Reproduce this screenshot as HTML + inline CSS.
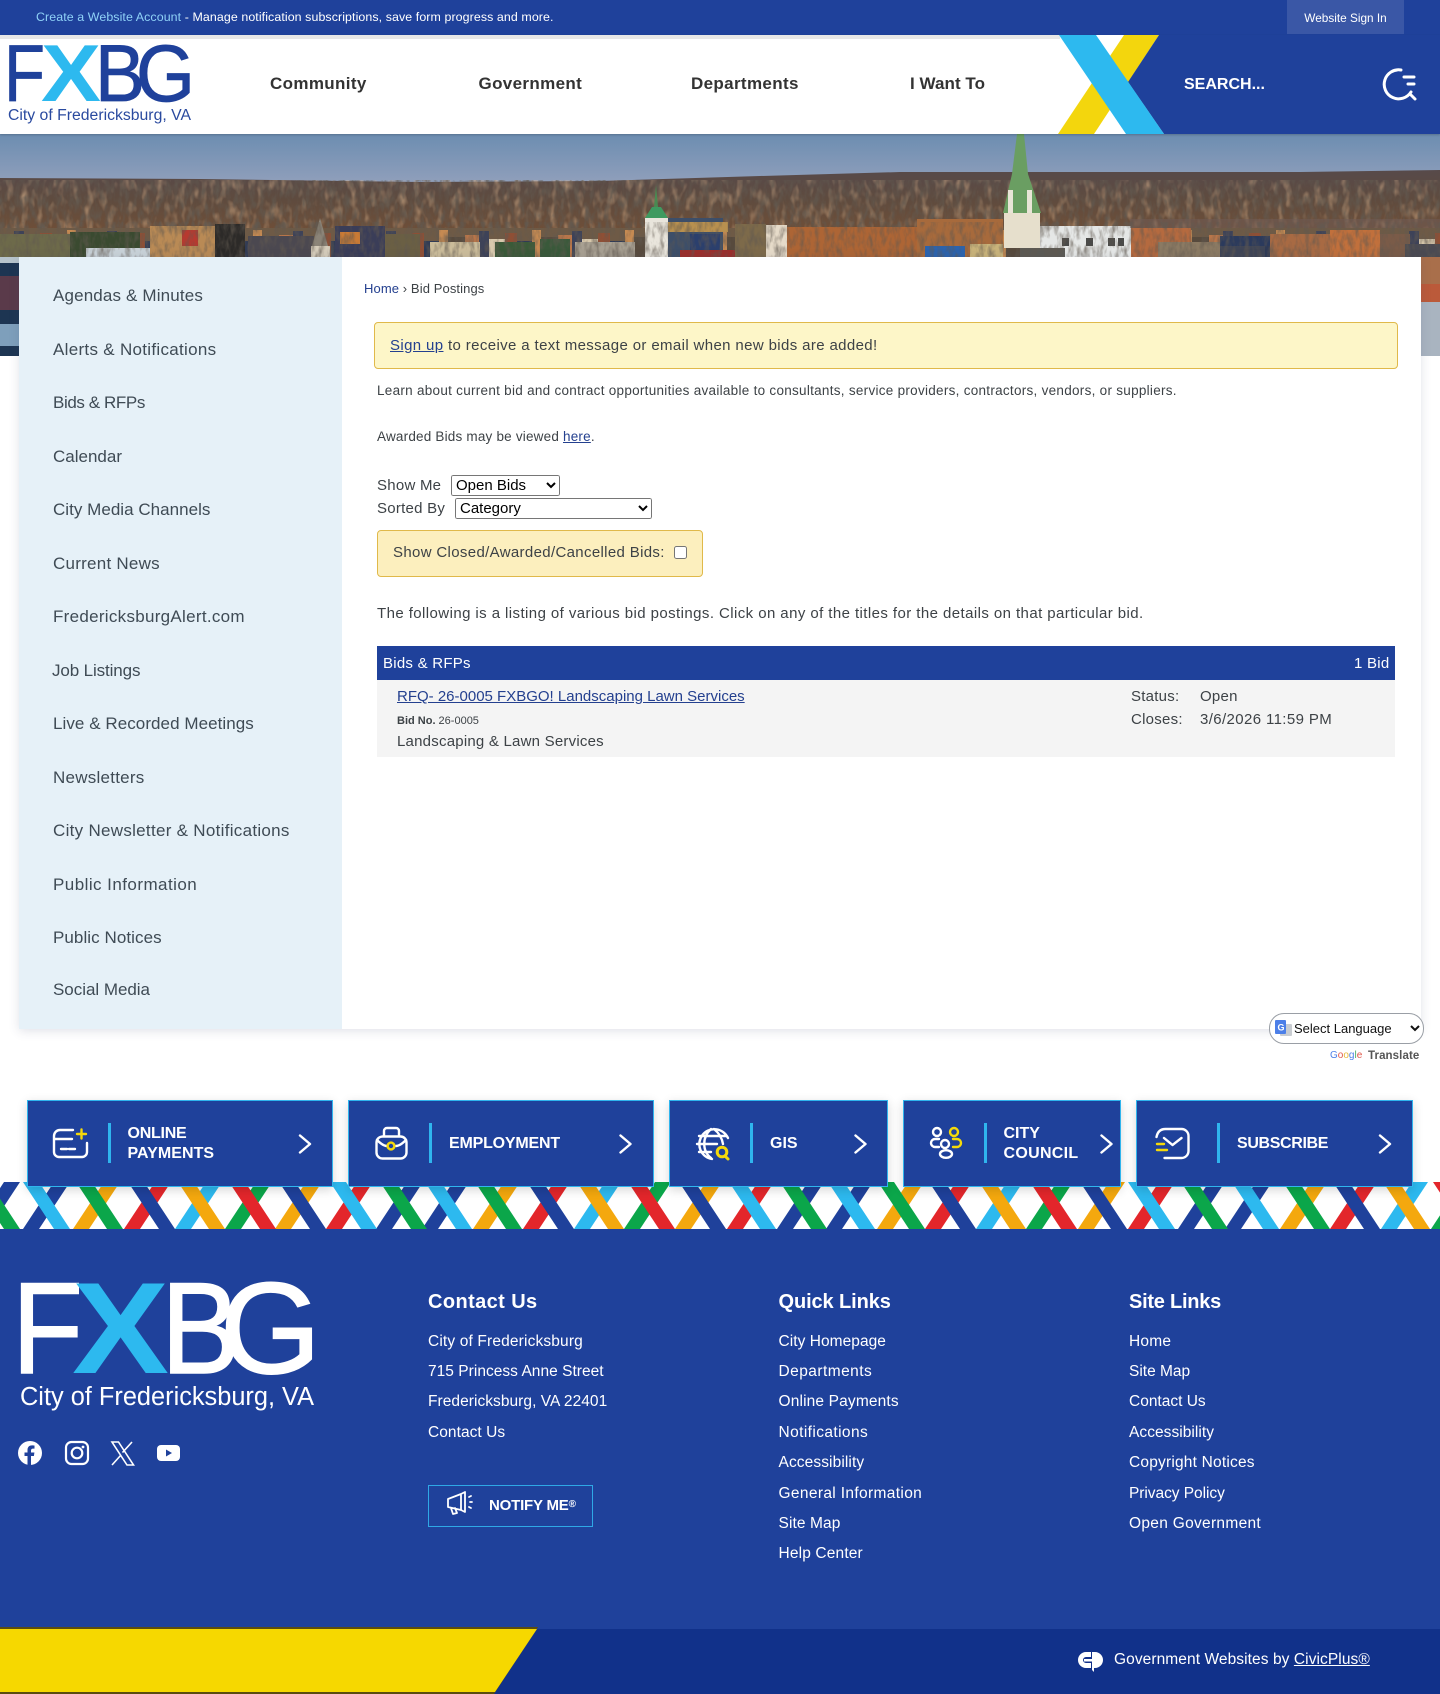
<!DOCTYPE html>
<html lang="en"><head><meta charset="utf-8"><title>Bid Postings - City of Fredericksburg, VA</title>
<style>
html,body{margin:0;padding:0;background:#fff}
body{position:relative;width:1440px;height:1694px;overflow:hidden;font-family:"Liberation Sans",Arial,sans-serif;color:#3d4246}
a{color:inherit}
.abs,.t,select,input{position:absolute}
.t{white-space:nowrap;line-height:20px;text-decoration:none}
.side{font-size:17px;letter-spacing:.15px;color:#3f4b55;left:53px}
.nav{font-size:17px;font-weight:700;letter-spacing:.35px;color:#333;top:74px}
.b15{font-size:15px;letter-spacing:.25px;color:#3d4246}
.b13{font-size:13.5px;letter-spacing:.28px;color:#3d4246}
.lnk{color:#24408f;text-decoration:underline}
.btn{position:absolute;top:1100px;height:85px;background:#1f419b;border:1px solid #2fb5ee;box-shadow:0 3px 10px rgba(0,0,0,.16)}
.dv{position:absolute;width:3px;height:40px;top:1123px;background:#2fb5ee}
.bt{font-size:16px;font-weight:700;color:#fff}
.f{font-size:15.5px;letter-spacing:.2px;color:#fff}
.fh{font-size:20px;font-weight:700;letter-spacing:.4px;color:#fff;top:1292px}
.lb{fill:#2db9ef}.g{fill:#0ba64a}.n{fill:#1f419b}.o{fill:#f4a80e}.r{fill:#e3262b}
svg{position:absolute;overflow:visible}
.w{fill:none;stroke:#fff;stroke-width:2.4;stroke-linecap:round;stroke-linejoin:round}
.y{fill:none;stroke:#f5d90a;stroke-width:2.4;stroke-linecap:round;stroke-linejoin:round}
</style></head><body>

<!-- hero photo -->
<svg style="left:0;top:134px" width="1440" height="222" viewBox="0 0 1440 222">
<defs>
<linearGradient id="sky" x1="0" y1="0" x2="0" y2="1"><stop offset="0" stop-color="#6c8db1"/><stop offset="1" stop-color="#98a3bd"/></linearGradient>
<linearGradient id="tr" x1="0" y1="0" x2="0" y2="1"><stop offset="0" stop-color="#574a4a"/><stop offset=".35" stop-color="#5f4b3e"/><stop offset=".7" stop-color="#6f4f38"/><stop offset="1" stop-color="#6a4530"/></linearGradient>
<filter id="nz" x="0" y="0" width="100%" height="100%"><feTurbulence type="fractalNoise" baseFrequency=".2 .08" numOctaves="3" seed="5"/><feColorMatrix values="0 0 0 0 .12 0 0 0 0 .1 0 0 0 0 .08 0 0 0 1.8 -.72"/></filter>
<filter id="nz2" x="0" y="0" width="100%" height="100%"><feTurbulence type="fractalNoise" baseFrequency=".14 .07" numOctaves="2" seed="9"/><feColorMatrix values="0 0 0 0 .68 0 0 0 0 .44 0 0 0 0 .26 0 0 0 1.4 -.68"/></filter>
<pattern id="hs" width="93" height="30" patternUnits="userSpaceOnUse" x="0" y="93">
<rect width="93" height="30" fill="#6e5a46"/>
<rect x="0" y="8" width="14" height="22" fill="#b9764a"/><rect x="14" y="4" width="10" height="26" fill="#3d4258"/><rect x="24" y="12" width="16" height="18" fill="#d8c9ad"/><rect x="40" y="6" width="12" height="24" fill="#8f4f35"/><rect x="52" y="14" width="15" height="16" fill="#2f3a55"/><rect x="67" y="3" width="9" height="27" fill="#c58a52"/><rect x="76" y="10" width="17" height="20" fill="#574a3d"/>
</pattern>
</defs>
<rect width="1440" height="60" fill="url(#sky)"/>
<polygon points="0,44 200,45 420,48 600,47 760,42 900,38 1100,38 1300,38 1440,36 1440,123 0,123" fill="url(#tr)"/>
<rect y="46" width="1440" height="77" filter="url(#nz2)"/>
<rect y="46" width="1440" height="77" filter="url(#nz)"/>
<rect y="94" width="1440" height="29" fill="url(#hs)"/>
<!-- left houses -->
<rect x="0" y="100" width="70" height="23" fill="#6d6a4a"/>
<rect x="70" y="98" width="70" height="25" fill="#3a4a30"/>
<rect x="86" y="114" width="66" height="9" fill="#c9d2d8"/>
<rect x="150" y="92" width="65" height="31" fill="#b98a55"/>
<rect x="182" y="96" width="16" height="16" fill="#b63a30"/>
<rect x="215" y="90" width="30" height="33" fill="#2c2a28"/>
<rect x="248" y="102" width="66" height="21" fill="#4b4850"/>
<polygon points="320,84 312,112 328,112" fill="#8b8478"/><rect x="311" y="112" width="19" height="11" fill="#d5ccba"/>
<rect x="335" y="92" width="50" height="31" fill="#3a3d58"/>
<rect x="340" y="98" width="20" height="12" fill="#c97a35"/>
<rect x="385" y="100" width="35" height="23" fill="#6a5f44"/>
<rect x="430" y="108" width="50" height="15" fill="#cbbc9a"/>
<rect x="495" y="108" width="40" height="15" fill="#3a5a38"/>
<rect x="540" y="105" width="30" height="18" fill="#39593a"/>
<rect x="575" y="108" width="60" height="15" fill="#a8a092"/>
<!-- small tower -->
<polygon points="656,51 654,73 658,73" fill="#4a8a52"/>
<polygon points="645,84 668,84 661,73 652,73" fill="#3f9a60"/>
<rect x="645" y="84" width="23" height="39" fill="#e9e5dc"/>
<rect x="668" y="84" width="55" height="39" fill="#3d4e68"/><rect x="668" y="88" width="60" height="10" fill="#b8904f"/>
<rect x="690" y="100" width="30" height="18" fill="#2b3f6d"/>
<rect x="680" y="116" width="75" height="7" fill="#9b2f2c"/>
<rect x="735" y="90" width="31" height="33" fill="#7d6a4a"/>
<!-- orange block -->
<rect x="766" y="91" width="21" height="32" fill="#e6dbc9"/>
<rect x="787" y="93" width="130" height="30" fill="#ad6535"/>
<rect x="917" y="85" width="86" height="38" fill="#a76a3c"/>
<rect x="925" y="112" width="40" height="11" fill="#2c63ad"/>
<rect x="970" y="110" width="33" height="13" fill="#c9b37a"/>
<!-- right houses -->
<rect x="1040" y="92" width="91" height="31" fill="#e5e7e6"/>
<rect x="1062" y="104" width="7" height="8" fill="#4a4a48"/><rect x="1086" y="104" width="7" height="8" fill="#4a4a48"/><rect x="1108" y="104" width="7" height="8" fill="#4a4a48"/><rect x="1118" y="104" width="6" height="8" fill="#4a4a48"/>
<rect x="1020" y="114" width="45" height="9" fill="#5c5a54"/>
<rect x="1131" y="94" width="60" height="29" fill="#b56a3f"/>
<rect x="1158" y="108" width="62" height="15" fill="#8b7a63"/>
<rect x="1220" y="102" width="50" height="10" fill="#2b3a5c"/><rect x="1220" y="112" width="45" height="11" fill="#3f4556"/>
<rect x="1270" y="100" width="60" height="23" fill="#a86a43"/>
<rect x="1330" y="96" width="50" height="27" fill="#c1703c"/>
<rect x="1380" y="100" width="30" height="23" fill="#7a5b48"/>
<rect x="1405" y="110" width="35" height="13" fill="#4a4a52"/>
<rect x="1130" y="85" width="310" height="9" fill="#6f5b55" opacity=".55"/>
<rect y="88" width="1440" height="35" filter="url(#nz)" opacity=".8"/>
<!-- steeple -->
<polygon points="1017,0 1024,0 1028,40 1041,79 1003,79 1012,40" fill="#6a9e62"/>
<rect x="1008" y="56" width="5" height="23" fill="#e8e4d6"/><rect x="1027" y="56" width="5" height="23" fill="#e8e4d6"/>
<rect x="1004" y="79" width="36" height="35" fill="#e6dfcc"/>
<!-- side slivers -->
<rect x="0" y="123" width="19" height="99" fill="#1d3552"/>
<rect x="0" y="123" width="19" height="6" fill="#b7c4cc"/>
<rect x="0" y="142" width="19" height="34" fill="#5a3a4a"/>
<rect x="0" y="190" width="19" height="22" fill="#7e9fbb"/>
<rect x="1421" y="123" width="19" height="27" fill="#a96f4b"/>
<rect x="1421" y="150" width="19" height="18" fill="#bb5a3a"/>
<rect x="1421" y="168" width="19" height="54" fill="#a9b4c0"/>
</svg>

<!-- top bar -->
<div class="abs" style="left:0;top:0;width:1440px;height:35px;background:#1f419b"></div>
<div class="t" style="left:36px;top:7px;font-size:12.4px;letter-spacing:.09px;color:#fff"><a href="#" style="color:#8fd2f7;text-decoration:none">Create a Website Account</a> - Manage notification subscriptions, save form progress and more.</div>
<div class="abs" style="left:1287px;top:0;width:117px;height:34px;background:#3a57a6"></div>
<div class="t" style="left:1287px;width:117px;text-align:center;top:8px;font-size:11.8px;color:#fff">Website Sign In</div>

<!-- header -->
<div class="abs" style="left:0;top:35px;width:1440px;height:99px;background:#fff;box-shadow:0 1px 2px rgba(0,0,0,.2)"></div>
<div class="abs" style="left:0;top:35px;width:1060px;height:4px;background:#e7e7e7"></div>
<svg style="left:0;top:0" width="1440" height="134" viewBox="0 0 1440 134">
<polygon points="1124,35 1159,35 1094,134 1058,134" fill="#f3d60d"/>
<polygon points="1159,35 1440,35 1440,134 1164,134 1128,82" fill="#1f419b"/>
<polygon points="1059,35 1096,35 1164,134 1126,134" fill="#2db9ef"/>
<g font-family="Liberation Sans,Arial,sans-serif" font-size="81">
<text x="4" y="101" textLength="41" lengthAdjust="spacingAndGlyphs" fill="#1f419b" stroke="#1f419b" stroke-width=".8">F</text>
<text x="41" y="101" textLength="60" lengthAdjust="spacingAndGlyphs" fill="#2db9ef" font-weight="700">X</text>
<text x="95" y="101" textLength="50" lengthAdjust="spacingAndGlyphs" fill="#1f419b" stroke="#1f419b" stroke-width=".8">B</text>
<text x="136" y="101" textLength="59" lengthAdjust="spacingAndGlyphs" fill="#1f419b" stroke="#1f419b" stroke-width=".8">G</text>
</g>
<text x="8" y="120" font-family="Liberation Sans,Arial,sans-serif" font-size="15.500" textLength="183" lengthAdjust="spacingAndGlyphs" fill="#2a4a9f">City of Fredericksburg, VA</text>
<!-- search icon -->
<g class="w" style="stroke-width:3">
<path d="M1401 70A14.500 14.500 0 1 0 1411 92"/><path d="M1404 77h10M1408 84h6M1411 95l4 4"/>
</g>
</svg>
<a class="t nav" href="#" style="left:270px">Community</a>
<a class="t nav" href="#" style="left:478.500px">Government</a>
<a class="t nav" href="#" style="left:691px">Departments</a>
<a class="t nav" href="#" style="left:910px;letter-spacing:.05px">I Want To</a>
<div class="t" style="left:1184px;top:75px;font-size:16px;font-weight:700;color:#fff">SEARCH...</div>

<!-- main panel -->
<div class="abs" style="left:19px;top:257px;width:1402px;height:772px;background:#fff;box-shadow:0 2px 10px rgba(60,70,110,.16)"></div>
<div class="abs" style="left:19px;top:257px;width:323px;height:772px;background:#e6f1f8"></div>

<a class="t side" href="#" style="top:285.500px">Agendas &amp; Minutes</a>
<a class="t side" href="#" style="top:339.500px;letter-spacing:.3px">Alerts &amp; Notifications</a>
<a class="t side" href="#" style="top:392.500px;letter-spacing:-.4px">Bids &amp; RFPs</a>
<a class="t side" href="#" style="top:446.500px;letter-spacing:0">Calendar</a>
<a class="t side" href="#" style="top:499.500px;letter-spacing:.03px">City Media Channels</a>
<a class="t side" href="#" style="top:553.500px;letter-spacing:.25px">Current News</a>
<a class="t side" href="#" style="top:606.500px;letter-spacing:.29px">FredericksburgAlert.com</a>
<a class="t side" href="#" style="top:660.500px;left:52px;letter-spacing:-.12px">Job Listings</a>
<a class="t side" href="#" style="top:713.500px;letter-spacing:.06px">Live &amp; Recorded Meetings</a>
<a class="t side" href="#" style="top:767.500px;letter-spacing:.25px">Newsletters</a>
<a class="t side" href="#" style="top:820.500px;letter-spacing:.29px">City Newsletter &amp; Notifications</a>
<a class="t side" href="#" style="top:874.500px;letter-spacing:.45px">Public Information</a>
<a class="t side" href="#" style="top:927.500px;letter-spacing:.07px">Public Notices</a>
<a class="t side" href="#" style="top:980px;letter-spacing:-.03px">Social Media</a>

<div class="t" style="left:364px;top:278.500px;font-size:13px;letter-spacing:.1px"><a href="#" style="color:#24408f;text-decoration:none">Home</a> › Bid Postings</div>

<div class="abs" style="left:374px;top:322px;width:1022px;height:45px;background:#fdf6c8;border:1px solid #e0b94a;border-radius:4px"></div>
<div class="t b15" style="left:390px;top:335.500px;letter-spacing:.37px"><a class="lnk" href="#">Sign up</a> to receive a text message or email when new bids are added!</div>
<div class="t b13" style="left:377px;top:381px">Learn about current bid and contract opportunities available to consultants, service providers, contractors, vendors, or suppliers.</div>
<div class="t b13" style="left:377px;top:427px;letter-spacing:.2px">Awarded Bids may be viewed <a class="lnk" href="#">here</a>.</div>

<div class="t b15" style="left:377px;top:476px">Show Me</div>
<select style="left:451px;top:475px;width:109px;height:21px;font:15px 'Liberation Sans',Arial,sans-serif;padding:0;margin:0"><option>Open Bids</option></select>
<div class="t b15" style="left:377px;top:499px">Sorted By</div>
<select style="left:455px;top:498px;width:197px;height:21px;font:15px 'Liberation Sans',Arial,sans-serif;padding:0;margin:0"><option>Category</option></select>

<div class="abs" style="left:377px;top:530px;width:324px;height:45px;background:#fcefbe;border:1px solid #e0b94a;border-radius:4px"></div>
<div class="t b15" style="left:393px;top:543px;letter-spacing:.34px">Show Closed/Awarded/Cancelled Bids:</div>
<input type="checkbox" style="left:674px;top:546px;width:13px;height:13px;margin:0">

<div class="t b15" style="left:377px;top:603.500px;letter-spacing:.42px">The following is a listing of various bid postings. Click on any of the titles for the details on that particular bid.</div>

<div class="abs" style="left:377px;top:646px;width:1018px;height:34px;background:#1f419b"></div>
<div class="t b15" style="left:383px;top:653.500px;color:#fff">Bids &amp; RFPs</div>
<div class="t b15" style="left:1354px;top:653.500px;color:#fff">1 Bid</div>
<div class="abs" style="left:377px;top:680px;width:1018px;height:77px;background:#f4f4f4"></div>
<a class="t b15 lnk" href="#" style="left:397px;top:687px;color:#24408f;letter-spacing:0">RFQ- 26-0005 FXBGO! Landscaping Lawn Services</a>
<div class="t" style="left:397px;top:711px;font-size:11px;color:#3d4246"><b>Bid No.</b> 26-0005</div>
<div class="t b15" style="left:397px;top:732px;letter-spacing:.22px">Landscaping &amp; Lawn Services</div>
<div class="t b15" style="left:1131px;top:687px">Status:</div>
<div class="t b15" style="left:1200px;top:687px">Open</div>
<div class="t b15" style="left:1131px;top:710px">Closes:</div>
<div class="t b15" style="left:1200px;top:710px;letter-spacing:.38px">3/6/2026 11:59 PM</div>

<!-- translate -->
<select style="left:1269px;top:1013px;width:155px;height:31px;border:1px solid #9a9fa6;border-radius:15px;background:#fff;font:13px 'Liberation Sans',Arial,sans-serif;padding:0 0 0 20px;margin:0;color:#111"><option>Select Language</option></select>
<svg style="left:1275px;top:1020px" width="18" height="18" viewBox="0 0 18 18"><rect x="5" y="4" width="12" height="12" rx="1" fill="#c9cdd2"/><rect x="0" y="0" width="11" height="14" rx="1" fill="#4c7fe8"/><text x="2.500" y="10.500" font-size="9" font-weight="700" fill="#fff" font-family="Liberation Sans,Arial,sans-serif">G</text></svg>
<div class="t" style="left:1330px;top:1046px;font-size:10px;font-weight:400"><span style="color:#4c7fe8">G</span><span style="color:#e0574a">o</span><span style="color:#e8b93a">o</span><span style="color:#4c7fe8">g</span><span style="color:#4caf6a">l</span><span style="color:#e0574a">e</span></div>
<div class="t" style="left:1368px;top:1046px;font-size:11.500px;font-weight:700;letter-spacing:.1px;color:#555">Translate</div>

<!-- woven strip -->
<svg style="left:0;top:1182px" width="1440" height="47" viewBox="0 0 1440 47">
<g transform="skewX(-33.4)">
<rect class="n" x="4" width="16" height="47"/><rect class="n" x="54" width="16" height="47"/><rect class="o" x="104" width="16" height="47"/><rect class="r" x="155" width="16" height="47"/><rect class="lb" x="206" width="16" height="47"/><rect class="g" x="256" width="16" height="47"/><rect class="o" x="306" width="16" height="47"/><rect class="r" x="357" width="16" height="47"/><rect class="n" x="407" width="16" height="47"/><rect class="n" x="453" width="16" height="47"/><rect class="o" x="504" width="16" height="47"/><rect class="r" x="554" width="16" height="47"/><rect class="lb" x="605" width="16" height="47"/><rect class="g" x="655" width="16" height="47"/><rect class="o" x="706" width="16" height="47"/><rect class="r" x="758" width="16" height="47"/><rect class="n" x="808" width="16" height="47"/><rect class="n" x="857" width="16" height="47"/><rect class="o" x="908" width="16" height="47"/><rect class="r" x="956" width="16" height="47"/><rect class="lb" x="1007" width="16" height="47"/><rect class="g" x="1057" width="16" height="47"/><rect class="o" x="1109" width="16" height="47"/><rect class="r" x="1159" width="16" height="47"/><rect class="n" x="1209" width="16" height="47"/><rect class="n" x="1256" width="16" height="47"/><rect class="o" x="1311" width="16" height="47"/><rect class="r" x="1361" width="16" height="47"/><rect class="lb" x="1412" width="16" height="47"/><rect class="g" x="1462" width="16" height="47"/>
</g>
<g transform="skewX(33.4)">
<rect class="g" x="-27" width="16" height="47"/><rect class="lb" x="23" width="16" height="47"/><rect class="g" x="76" width="16" height="47"/><rect class="n" x="128" width="16" height="47"/><rect class="o" x="178" width="16" height="47"/><rect class="r" x="229" width="16" height="47"/><rect class="n" x="279" width="16" height="47"/><rect class="lb" x="330" width="16" height="47"/><rect class="g" x="380" width="16" height="47"/><rect class="lb" x="425" width="16" height="47"/><rect class="g" x="475" width="16" height="47"/><rect class="n" x="527" width="16" height="47"/><rect class="o" x="577" width="16" height="47"/><rect class="r" x="628" width="16" height="47"/><rect class="n" x="679" width="16" height="47"/><rect class="lb" x="729" width="16" height="47"/><rect class="g" x="780" width="16" height="47"/><rect class="lb" x="828" width="16" height="47"/><rect class="g" x="878" width="16" height="47"/><rect class="n" x="929" width="16" height="47"/><rect class="o" x="979" width="16" height="47"/><rect class="r" x="1030" width="16" height="47"/><rect class="n" x="1080" width="16" height="47"/><rect class="lb" x="1128" width="16" height="47"/><rect class="g" x="1181" width="16" height="47"/><rect class="lb" x="1232" width="16" height="47"/><rect class="g" x="1283" width="16" height="47"/><rect class="n" x="1333" width="16" height="47"/><rect class="o" x="1383" width="16" height="47"/><rect class="r" x="1433" width="16" height="47"/>
</g>
</svg>

<!-- buttons -->
<div class="btn" style="left:27px;width:304px"></div>
<div class="btn" style="left:348px;width:304px"></div>
<div class="btn" style="left:669px;width:217px"></div>
<div class="btn" style="left:903px;width:216px"></div>
<div class="btn" style="left:1136px;width:275px"></div>
<div class="dv" style="left:108px"></div><div class="dv" style="left:429px"></div><div class="dv" style="left:750px"></div><div class="dv" style="left:984px"></div><div class="dv" style="left:1217px"></div>
<div class="t bt" style="left:127.500px;top:1124px;letter-spacing:-.25px">ONLINE</div><div class="t bt" style="left:127.500px;top:1144px;letter-spacing:.05px">PAYMENTS</div>
<div class="t bt" style="left:449px;top:1134px;letter-spacing:-.2px">EMPLOYMENT</div>
<div class="t bt" style="left:770px;top:1134px">GIS</div>
<div class="t bt" style="left:1003.500px;top:1124px">CITY</div><div class="t bt" style="left:1003.500px;top:1144px;letter-spacing:.3px">COUNCIL</div>
<div class="t bt" style="left:1237px;top:1134px;letter-spacing:-.35px">SUBSCRIBE</div>
<svg style="left:0;top:0" width="1440" height="1200" viewBox="0 0 1440 1200">
<g class="w">
<path d="M300 1135.500l10 8.500-10 8.500M620.500 1135.500l10 8.500-10 8.500M855.500 1135.500l10 8.500-10 8.500M1101.500 1135.500l10 8.500-10 8.500M1380 1135.500l10 8.500-10 8.500"/>
<!-- payments -->
<path d="M73 1130H60a6 6 0 0 0-6 6v16a5 5 0 0 0 5 5h23a5 5 0 0 0 5-5v-9M54 1139h18M61 1149h6M69 1149h6"/>
<!-- briefcase -->
<rect x="376.500" y="1136.500" width="30" height="22" rx="6"/><path d="M384 1136v-5a3 3 0 0 1 3-3h9a3 3 0 0 1 3 3v5M377 1140q6 6 10 6M406 1140q-6 6-10 6"/>
<!-- globe -->
<path d="M728 1138a15 15 0 1 0-16 21M697 1144h20M699 1136h27M699 1152h12"/><path d="M711 1129c-9 8-9 22 0 29M714 1129c5 4 8 9 9 15"/>
<!-- council -->
<circle cx="937" cy="1132" r="4"/><path d="M939 1139h-4a4 4 0 0 0 0 8h4"/><circle cx="945" cy="1144" r="4"/><ellipse cx="946" cy="1154" rx="6" ry="3.800"/>
<!-- subscribe -->
<path d="M1156.500 1137c1-5 4-8 9-8h16a7 7 0 0 1 7 7v15a7 7 0 0 1-7 7h-17M1164 1138l8.500 7 9-7"/>
</g>
<g class="y">
<path d="M81.500 1129.500v9M77 1134h9"/>
<circle cx="391" cy="1146" r="3.400"/>
<circle cx="722" cy="1152" r="4.800" style="stroke-width:3"/><path d="M725 1156l3 3" style="stroke-width:3"/>
<circle cx="954" cy="1132" r="4"/><path d="M953 1139h4a4 4 0 0 1 0 8h-4"/>
<path d="M1157 1144h7M1157 1150h10"/>
</g>
</svg>

<!-- footer -->
<div class="abs" style="left:0;top:1229px;width:1440px;height:400px;background:#1f419b"></div>
<svg style="left:0;top:1229px" width="1440" height="300" viewBox="0 1229 1440 300">
<g font-family="Liberation Sans,Arial,sans-serif" font-size="130">
<text x="12" y="1373" textLength="71" lengthAdjust="spacingAndGlyphs" fill="#fff" stroke="#fff" stroke-width="1.500">F</text>
<text x="72" y="1373" textLength="97" lengthAdjust="spacingAndGlyphs" fill="#2db9ef" font-weight="700">X</text>
<text x="161" y="1373" textLength="79" lengthAdjust="spacingAndGlyphs" fill="#fff" stroke="#fff" stroke-width="1.500">B</text>
<text x="220" y="1373" textLength="101" lengthAdjust="spacingAndGlyphs" fill="#fff" stroke="#fff" stroke-width="1.500">G</text>
</g>
<text x="20" y="1405" font-family="Liberation Sans,Arial,sans-serif" font-size="25.500" textLength="294" lengthAdjust="spacingAndGlyphs" fill="#fff">City of Fredericksburg, VA</text>
<!-- facebook -->
<circle cx="30" cy="1453" r="12" fill="#fff"/><path d="M27.500 1465v-9h-3v-3.500h3v-2.500c0-3 1.800-4.600 4.500-4.600 1.300 0 2.500.2 2.500.2v3h-1.500c-1.500 0-2 .9-2 1.900v2h3.400l-.5 3.500h-2.900v9z" fill="#1f419b"/>
<!-- instagram -->
<rect x="66" y="1442" width="22" height="22" rx="5.500" fill="none" stroke="#fff" stroke-width="2.200"/><circle cx="77" cy="1453" r="5.300" fill="none" stroke="#fff" stroke-width="2.200"/><circle cx="83" cy="1447" r="1.400" fill="#fff"/>
<!-- x -->
<path d="M112 1442h6.500l15 23h-6.500zM132 1442l-9.500 10.500M121 1455l-9 10" fill="none" stroke="#fff" stroke-width="1.600"/>
<!-- youtube -->
<rect x="157" y="1445" width="23" height="16" rx="4" fill="#fff"/><path d="M166 1449.500v7l6-3.500z" fill="#1f419b"/>
<!-- notify -->
<rect x="428.500" y="1485.500" width="164" height="41" fill="none" stroke="#2fa8e6"/>
<g fill="none" stroke="#fff" stroke-width="1.800" stroke-linejoin="round" stroke-linecap="round">
<path d="M448 1499l13-5v16l-13-3zM461 1494l4-2v20l-4-2zM451 1508l2 6 4-1-2-5M469 1497l2-1M470 1502h2M469 1507l2 1"/>
</g>
</svg>
<div class="t fh" style="left:428px">Contact Us</div>
<div class="t fh" style="left:778.500px;letter-spacing:-.1px">Quick Links</div>
<div class="t fh" style="left:1129px;letter-spacing:-.25px">Site Links</div>

<a class="t f" href="#" style="left:428px;top:1331.500px;letter-spacing:.15px">City of Fredericksburg</a>
<div class="t f" style="left:428px;top:1361.500px;letter-spacing:.03px">715 Princess Anne Street</div>
<div class="t f" style="left:428px;top:1391.500px;letter-spacing:.05px">Fredericksburg, VA 22401</div>
<a class="t f" href="#" style="left:428px;top:1422.500px;letter-spacing:.05px">Contact Us</a>
<div class="t" style="left:489px;top:1494.500px;font-size:15px;font-weight:700;letter-spacing:-.2px;color:#fff">NOTIFY ME<span style="font-size:10px;vertical-align:3px">®</span></div>

<a class="t f" href="#" style="left:778.500px;top:1331.500px;letter-spacing:.05px">City Homepage</a>
<a class="t f" href="#" style="left:778.500px;top:1361.500px;letter-spacing:.45px">Departments</a>
<a class="t f" href="#" style="left:778.500px;top:1391.500px;letter-spacing:.15px">Online Payments</a>
<a class="t f" href="#" style="left:778.500px;top:1422.500px;letter-spacing:.4px">Notifications</a>
<a class="t f" href="#" style="left:778.500px;top:1452.500px;letter-spacing:.1px">Accessibility</a>
<a class="t f" href="#" style="left:778.500px;top:1483.500px;letter-spacing:.35px">General Information</a>
<a class="t f" href="#" style="left:778.500px;top:1513.500px;letter-spacing:.1px">Site Map</a>
<a class="t f" href="#" style="left:778.500px;top:1543.500px;letter-spacing:.15px">Help Center</a>

<a class="t f" href="#" style="left:1129px;top:1331.500px">Home</a>
<a class="t f" href="#" style="left:1129px;top:1361.500px;letter-spacing:0">Site Map</a>
<a class="t f" href="#" style="left:1129px;top:1391.500px;letter-spacing:0">Contact Us</a>
<a class="t f" href="#" style="left:1129px;top:1422.500px;letter-spacing:.05px">Accessibility</a>
<a class="t f" href="#" style="left:1129px;top:1452.500px">Copyright Notices</a>
<a class="t f" href="#" style="left:1129px;top:1483.500px;letter-spacing:-.05px">Privacy Policy</a>
<a class="t f" href="#" style="left:1129px;top:1513.500px;letter-spacing:.3px">Open Government</a>

<!-- bottom bar -->
<svg style="left:0;top:1627px" width="1440" height="67" viewBox="0 1627 1440 67">
<rect y="1629" width="1440" height="65" fill="#11318a"/>
<polygon points="0,1627 538,1627 494,1694 0,1694" fill="#5a4d10"/>
<polygon points="0,1629 537,1629 495,1692 0,1692" fill="#f6d800"/>
<path d="M1091 1652h-5a8 8 0 0 0 0 16h5v-5h-5a3 3 0 0 1 0-6h5zM1092 1652h3a8 8 0 0 1 0 16h-1v4l-2-2z" fill="#fff"/>
<rect x="1084" y="1659" width="14" height="2.500" fill="#fff"/>
</svg>
<div class="t" style="left:1114px;top:1650px;font-size:15.500px;letter-spacing:.08px;color:#fff">Government Websites by <a href="#" style="color:#fff;text-decoration:underline">CivicPlus®</a></div>
</body></html>
